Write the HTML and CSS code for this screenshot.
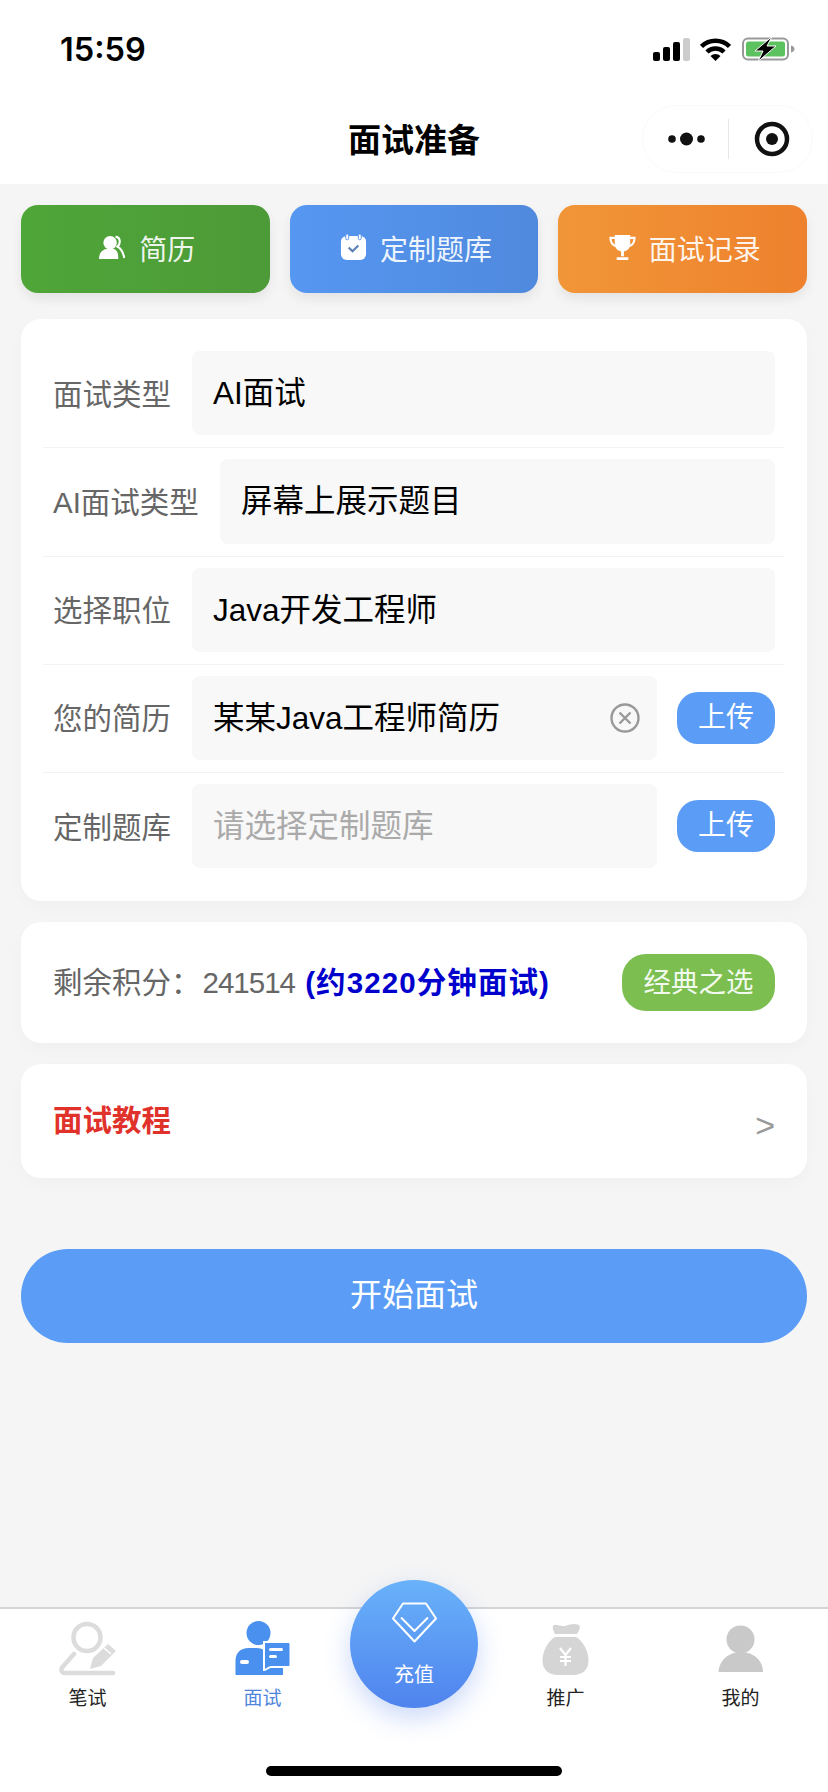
FILE: index.html
```html
<!DOCTYPE html>
<html lang="zh-CN">
<head>
    <meta charset="UTF-8">
    <meta name="viewport" content="width=device-width, initial-scale=1.0">
    <title>面试准备</title>
    <link rel="stylesheet" href="styles.css">
</head>
<body>
    <div class="page">
        <header class="header">
            <div class="status-bar">
                <span class="time">15:59</span>
                <div class="status-icons">
                    <svg class="icon-signal" viewBox="0 0 37 23"><rect x="0" y="14" width="7" height="9" rx="2" fill="#000"/><rect x="10" y="9" width="7" height="14" rx="2" fill="#000"/><rect x="20" y="4" width="7" height="19" rx="2" fill="#000"/><rect x="30" y="0" width="7" height="23" rx="2" fill="#ccc"/></svg>
                    <svg class="icon-wifi" viewBox="0 0 31 23"><path d="M1.500 8.500a20 20 0 0 1 28 0" fill="none" stroke="#000" stroke-width="4.500"/><path d="M7 14a12 12 0 0 1 17 0" fill="none" stroke="#000" stroke-width="4.500"/><path d="M10.500 18a7.500 7.500 0 0 1 10 0l-5 5z" fill="#000"/></svg>
                    <svg class="icon-battery" viewBox="0 0 53 26"><rect x="1" y="2.500" width="45" height="21" rx="5" fill="none" stroke="#999" stroke-width="2"/><rect x="4" y="5.500" width="39" height="15" rx="2.500" fill="#5cc25f"/><path d="M49 9.500c2 .4 3.500 1.600 3.500 3.500s-1.500 3.100-3.500 3.500z" fill="#999"/><path d="M30 .5L13 15h8l-5 10.500L34 10h-9z" fill="#000" stroke="#fff" stroke-width="1"/></svg>
                </div>
            </div>
            <div class="nav-bar">
                <h1 class="nav-title">面试准备</h1>
                <div class="capsule">
                    <svg class="capsule-more" viewBox="0 0 38 14"><circle cx="4" cy="7" r="3.800" fill="#111"/><circle cx="18.500" cy="7" r="6.500" fill="#111"/><circle cx="33" cy="7" r="3.800" fill="#111"/></svg>
                    <span class="capsule-line"></span>
                    <svg class="capsule-record" viewBox="0 0 36 36"><circle cx="18" cy="18" r="15" fill="none" stroke="#111" stroke-width="4.500"/><circle cx="18" cy="18" r="6" fill="#111"/></svg>
                </div>
            </div>
        </header>

        <main class="content">
            <div class="quick-row">
                <a class="quick-btn quick-green">
                    <svg class="quick-icon" viewBox="0 0 28 26"><circle cx="11.500" cy="8" r="7" fill="#fff"/><path d="M0 25c0-7 4-11 11.500-11S20 18 20 25z" fill="#fff"/><path d="M18 2c4 .5 5 7 1 10 4 2 6 6 7 11" fill="none" stroke="#fff" stroke-width="2.200" stroke-linecap="round"/></svg>
                    <span>简历</span>
                </a>
                <a class="quick-btn quick-blue">
                    <svg class="quick-icon" viewBox="0 0 28 28"><rect x="1" y="2" width="26" height="25" rx="6" fill="#fff"/><rect x="6" y="0" width="3" height="6" rx="1.500" fill="#fff" stroke="#5493ea" stroke-width="1"/><rect x="19" y="0" width="3" height="6" rx="1.500" fill="#fff" stroke="#5493ea" stroke-width="1"/><path d="M9 14l4 4 6-6" fill="none" stroke="#5b7fb5" stroke-width="2.200"/></svg>
                    <span>定制题库</span>
                </a>
                <a class="quick-btn quick-orange">
                    <svg class="quick-icon" viewBox="0 0 28 28"><path d="M6 1h16v9c0 5-3.500 8-8 8s-8-3-8-8z" fill="#fff"/><path d="M7 4H1.500c0 5 2 8 6.500 9M21 4h5.500c0 5-2 8-6.500 9" fill="none" stroke="#fff" stroke-width="2.200"/><path d="M12.500 17h3v6h-3zM8 24h12v3H8z" fill="#fff"/></svg>
                    <span>面试记录</span>
                </a>
            </div>

            <section class="card form-card">
                <div class="form-row">
                    <label class="form-label">面试类型</label>
                    <div class="form-input">AI面试</div>
                </div>
                <div class="form-row">
                    <label class="form-label">AI面试类型</label>
                    <div class="form-input">屏幕上展示题目</div>
                </div>
                <div class="form-row">
                    <label class="form-label">选择职位</label>
                    <div class="form-input">Java开发工程师</div>
                </div>
                <div class="form-row">
                    <label class="form-label">您的简历</label>
                    <div class="form-input">
                        <span class="form-value">某某Java工程师简历</span>
                        <svg class="clear-icon" viewBox="0 0 30 30"><circle cx="15" cy="15" r="13.500" fill="none" stroke="#999" stroke-width="2.400"/><path d="M9.500 9.500l11 11M20.500 9.500l-11 11" stroke="#999" stroke-width="2.400"/></svg>
                    </div>
                    <a class="upload-btn">上传</a>
                </div>
                <div class="form-row">
                    <label class="form-label">定制题库</label>
                    <div class="form-input placeholder">请选择定制题库</div>
                    <a class="upload-btn">上传</a>
                </div>
            </section>

            <section class="card points-card">
                <p class="points-text">剩余积分：<span class="points-num">241514</span> <b class="points-hint">(约3220分钟面试)</b></p>
                <a class="plan-btn">经典之选</a>
            </section>

            <section class="card tutorial-card">
                <span class="tutorial-title">面试教程</span>
                <span class="tutorial-arrow">&gt;</span>
            </section>

            <a class="start-btn">开始面试</a>
        </main>

        <nav class="tabbar">
            <a class="tab">
                <svg class="tab-icon" viewBox="0 0 58 56"><circle cx="28" cy="17.500" r="13.500" fill="none" stroke="#dcdcdc" stroke-width="4.500"/><path d="M15 34L3.500 47c-2 2.500-1 6 2.500 6h48" fill="none" stroke="#dcdcdc" stroke-width="4.500" stroke-linecap="round"/><path d="M49 24l8 7-15 15-11 3 3-11z" fill="#dcdcdc"/><path d="M45 28l7 6" stroke="#fff" stroke-width="1.500"/></svg>
                <span>笔试</span>
            </a>
            <a class="tab tab-active">
                <svg class="tab-icon" viewBox="0 0 58 56"><circle cx="24.500" cy="13" r="12" fill="#4a90ee"/><path d="M1.500 55V41c0-8 5-13 13-13h8c6 0 10 3 12 8v12h14.500v7z" fill="#4a90ee"/><rect x="6" y="40" width="9" height="4" rx="2" fill="#fff"/><path d="M30 22h24.500a2 2 0 0 1 2 2v21a2 2 0 0 1-2 2H37c-3 0-4 3-7 3z" fill="#4a90ee" stroke="#fff" stroke-width="2"/><rect x="35" y="28" width="14" height="3" rx="1.500" fill="#fff"/><rect x="35" y="35" width="8" height="3" rx="1.500" fill="#fff"/></svg>
                <span>面试</span>
            </a>
            <div class="tab-center">
                <a class="recharge">
                    <svg class="recharge-icon" viewBox="0 0 45 41"><path d="M11 1.500h23l10 15-21.500 23L1 16.500z" fill="none" stroke="#fff" stroke-width="2" stroke-linejoin="round"/><path d="M9 15.500L22.500 29 36 15.500" fill="none" stroke="#fff" stroke-width="2" stroke-linejoin="round"/></svg>
                    <span>充值</span>
                </a>
            </div>
            <a class="tab">
                <svg class="tab-icon" viewBox="0 0 58 56"><path d="M16 6c3-3 7 1 12 0 5-2 10-3 14-1 2 2 0 6-2 9H18c-1-2-3-6-2-8z" fill="#d5d5d5"/><path d="M18 17h21c7 4 12.500 14 12.500 24 0 9-7 14-15 14h-16c-8 0-15-5-15-14 0-10 5.500-20 12.500-24z" fill="#d5d5d5"/><path d="M23 28l5.500 7 5.500-7M28.500 35v11M23 37h11M23 41h11" fill="none" stroke="#fff" stroke-width="2.200"/></svg>
                <span>推广</span>
            </a>
            <a class="tab">
                <svg class="tab-icon" viewBox="0 0 58 56"><circle cx="28.500" cy="19.500" r="14" fill="#c9c9c9"/><path d="M6.500 52C7 41 16 32 29 32s22 9 22 20z" fill="#c9c9c9"/></svg>
                <span>我的</span>
            </a>
            <span class="home-bar"></span>
        </nav>
    </div>
</body>
</html>
```

FILE: styles.css
```css
* {
    box-sizing: border-box;
}
body {
    margin: 0;
    background: #f5f5f5;
    font-family: "Liberation Sans", "Noto Sans CJK SC", sans-serif;
    color: #000;
}
a {
    display: block;
}
.page {
    width: 828px;
    height: 1792px;
    display: flex;
    flex-direction: column;
    overflow: hidden;
}

/* 顶部 */
.header {
    background: #fff;
    height: 184px;
    flex-shrink: 0;
}
.status-bar {
    height: 84px;
    padding: 14px 33px 0 60px;
    display: flex;
    justify-content: space-between;
    align-items: center;
}
.time {
    font-family: Inter, sans-serif;
    font-size: 32.5px;
    font-weight: 600;
    margin-top: 1px;
}
.status-icons {
    display: flex;
    align-items: center;
    gap: 10px;
}
.icon-signal {
    width: 37px;
    height: 23px;
}
.icon-wifi {
    width: 31px;
    height: 23px;
}
.icon-battery {
    width: 53px;
    height: 26px;
    margin-left: 1px;
}
.nav-bar {
    position: relative;
    height: 100px;
    display: flex;
    justify-content: center;
    align-items: center;
    padding-top: 8px;
}
.nav-title {
    margin: 0;
    font-size: 33px;
    font-weight: 700;
}
.capsule {
    position: absolute;
    left: 642px;
    top: 21px;
    width: 171px;
    height: 68px;
    border: 1px solid #fafafa;
    border-radius: 34px;
    display: flex;
    align-items: center;
    padding-left: 25px;
}
.capsule-more {
    width: 38px;
    height: 14px;
}
.capsule-line {
    width: 1px;
    height: 40px;
    background: #e6e6e6;
    margin: 0 25px 0 22px;
}
.capsule-record {
    width: 36px;
    height: 36px;
}

/* 内容 */
.content {
    flex: 1;
    padding: 21px 21px 0;
}
.quick-row {
    display: flex;
    gap: 20px;
    margin-bottom: 26px;
}
.quick-btn {
    flex: 1;
    height: 88px;
    padding: 0 0 3px 4px;
    border-radius: 17px;
    display: flex;
    justify-content: center;
    align-items: center;
    gap: 13px;
    color: rgba(255, 255, 255, 0.92);
    font-size: 28px;
    box-shadow: 0 6px 12px rgba(0, 0, 0, 0.07);
}
.quick-icon {
    width: 27px;
    height: 27px;
}
.quick-green {
    background: linear-gradient(90deg, #4fa638, #4d9a38);
}
.quick-blue {
    background: linear-gradient(90deg, #5697f2, #4f89dd);
}
.quick-orange {
    background: linear-gradient(90deg, #f19638, #ee812d);
}
.card {
    background: #fff;
    border-radius: 20px;
    margin-bottom: 21px;
    box-shadow: 0 6px 16px rgba(0, 0, 0, 0.025);
}
.form-card {
    padding: 21px 23px 21px 22px;
}
.form-row {
    display: flex;
    align-items: center;
    padding: 11px 9px 12px 10px;
    border-bottom: 1px solid #f3f3f3;
}
.form-row:last-child {
    border-bottom: 0;
}
.form-label {
    font-size: 29.5px;
    color: #666;
    margin: 0 21px 3px 0;
    white-space: nowrap;
}
.form-input {
    flex: 1;
    height: 84.25px;
    background: #f8f8f8;
    border-radius: 8px;
    padding: 0 17px 6px 21px;
    display: flex;
    justify-content: space-between;
    align-items: center;
    font-size: 31.5px;
}
.placeholder {
    color: #aaa;
}
.clear-icon {
    width: 30px;
    height: 30px;
    margin-top: 6px;
}
.upload-btn {
    width: 98px;
    height: 52px;
    margin-left: 20px;
    background: #5a9cf6;
    border-radius: 21px;
    color: #fff;
    font-size: 28px;
    text-align: center;
    line-height: 52px;
}
.points-card {
    height: 121px;
    padding: 0 32px;
    display: flex;
    justify-content: space-between;
    align-items: center;
}
.points-text {
    margin: 0 0 6px;
    font-size: 29.5px;
    color: #666;
}
.points-num {
    letter-spacing: -1px;
    margin: 0 2px 0 2px;
}
.points-hint {
    color: #0000cd;
    letter-spacing: 1.1px;
}
.plan-btn {
    width: 153px;
    height: 57px;
    background: #7cbf50;
    border-radius: 24px;
    color: rgba(255, 255, 255, 0.92);
    font-size: 27.5px;
    text-align: center;
    line-height: 57px;
}
.tutorial-card {
    height: 114px;
    padding: 0 32px;
    display: flex;
    justify-content: space-between;
    align-items: center;
}
.tutorial-title {
    font-size: 29.5px;
    font-weight: 700;
    color: #e0322b;
    margin-bottom: 6px;
}
.tutorial-arrow {
    font-size: 34px;
    color: #999;
    margin-top: 8px;
}
.start-btn {
    height: 94px;
    margin-top: 71px;
    background: #5a9cf6;
    border-radius: 47px;
    color: #fff;
    font-size: 32px;
    text-align: center;
    line-height: 92px;
}

/* 底部导航 */
.tabbar {
    position: relative;
    height: 185px;
    flex-shrink: 0;
    background: #fff;
    border-top: 2px solid #d4d4d4;
    display: flex;
    align-items: flex-start;
}
.tab {
    flex: 1;
    padding-top: 11px;
    display: flex;
    flex-direction: column;
    align-items: center;
    font-size: 19px;
    color: #222;
}
.tab span {
    margin-top: 7px;
}
.tab-active {
    color: #4f86dc;
}
.tab-icon {
    width: 58px;
    height: 56px;
}
.tab-center {
    width: 128px;
    flex-shrink: 0;
}
.recharge {
    position: absolute;
    left: 350px;
    top: -29px;
    width: 128px;
    height: 128px;
    border-radius: 50%;
    background: linear-gradient(180deg, #69b2fa, #4f83ee);
    box-shadow: 0 10px 26px rgba(70, 120, 230, 0.28);
    display: flex;
    flex-direction: column;
    align-items: center;
    padding-top: 22px;
    color: #fff;
    font-size: 20px;
}
.recharge-icon {
    width: 45px;
    height: 41px;
    margin-bottom: 16px;
}
.home-bar {
    position: absolute;
    left: 266px;
    top: 157px;
    width: 296px;
    height: 10px;
    border-radius: 5px;
    background: #000;
}
```
